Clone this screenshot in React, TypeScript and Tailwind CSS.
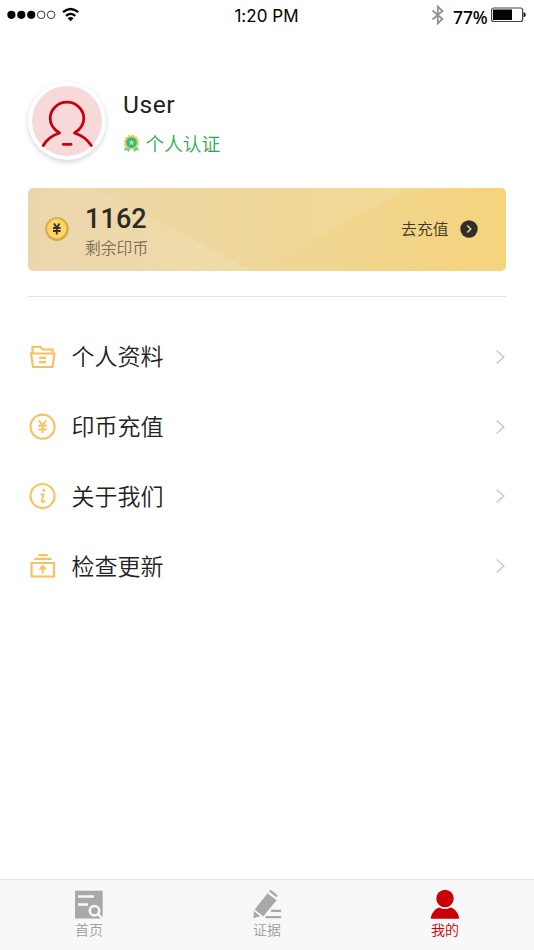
import type { ReactNode } from 'react';

const cjk = "font-['Noto_Sans_CJK_SC',sans-serif]";

function StatusBar() {
  return (
    <header className="flex h-8 shrink-0 items-center justify-between">
      <div className="flex w-[179px] items-center">
        <svg width="90" height="32" viewBox="0 0 90 32">
          <g fill="#050505">
            <circle cx="11.4" cy="14.8" r="4.1" />
            <circle cx="21.3" cy="14.8" r="4.1" />
            <circle cx="31.2" cy="14.8" r="4.1" />
          </g>
          <g fill="none" stroke="#222" strokeWidth="0.9">
            <circle cx="41.2" cy="14.8" r="3.8" />
            <circle cx="51.1" cy="14.8" r="3.8" />
          </g>
          <g fill="none" stroke="#050505" strokeWidth="2.3">
            <path d="M63 12.2Q70.5 5.8 78.300 12.200" />
            <path d="M66 15.900Q70.600 11.900 75.300 15.900" />
          </g>
          <path d="M67.600 18.200Q70.600 15.900 73.600 18.200L70.600 21.200Z" fill="#050505" />
        </svg>
      </div>
      <span className="whitespace-nowrap pt-px font-[Inter,sans-serif] text-[17px] leading-[33px] tracking-[0.05px] text-black">1:20 PM</span>
      <div className="flex w-[180px] items-center justify-end">
        <svg width="26" height="32" viewBox="427 0 26 32" fill="none" stroke="#929292" strokeWidth="1.8">
          <path d="M432.500 10.500L442.500 19L437.800 23.500V6.500L442.500 11L432.500 19.500" />
        </svg>
        <span className="w-[37px] whitespace-nowrap pt-0.5 font-['Noto_Sans',sans-serif] text-[17.500px] font-medium tracking-[-0.1px] text-black">77%</span>
        <svg width="44" height="32" viewBox="490 0 44 32">
          <rect x="491.600" y="8" width="31" height="13.500" rx="2" fill="white" stroke="#444" strokeWidth="1.200" />
          <path d="M493 9.500H512V20H493Z" fill="#050505" />
          <path d="M523.500 12.200C526.500 12.200 526.500 17.200 523.500 17.200Z" fill="#222" />
        </svg>
      </div>
    </header>
  );
}

function Avatar() {
  return (
    <div className="size-[78px] shrink-0 rounded-full border-4 border-white bg-[#f7d9da] shadow-[0_2px_5px_rgba(0,0,0,0.18)]">
      <svg width="70" height="70" viewBox="32 86 70 70" fill="none" stroke="#c7000b" strokeWidth="2.8" strokeLinecap="round" strokeLinejoin="round">
        <path d="M43.300 145.500Q48.500 136.500 59.500 133C54 129.500 50.200 124.500 50.200 118.500A16.800 16.300 0 0 1 83.800 118.500C83.800 124.500 80 129.500 74.500 133Q85.500 136.500 91.300 145.500" />
        <path d="M63.300 144.300H71" />
      </svg>
    </div>
  );
}

function Medal() {
  return (
    <svg width="17" height="19" viewBox="0 0 17 19">
      <path d="M3 12L1 16.500L4 16L5.500 18L8 13ZM14 12L16 16.500L13 16L11.500 18L9 13Z" fill="#4ac9ad" />
      <circle cx="8.500" cy="8.500" r="6.800" fill="#efc75a" stroke="#efc75a" strokeWidth="2" strokeDasharray="2.200 1.360" />
      <circle cx="8.500" cy="8.500" r="5.300" fill="#22bd90" />
      <path d="M8.500 5.500L9.400 7.500L11.500 7.700L9.900 9.200L10.400 11.300L8.500 10.200L6.600 11.300L7.100 9.200L5.500 7.700L7.600 7.500Z" fill="#c9dd83" />
    </svg>
  );
}

function BalanceCard() {
  return (
    <section className="relative mx-7 mt-[26px] flex h-[82.500px] w-[477.500px] shrink-0 items-center overflow-hidden rounded-[5px] bg-linear-to-r from-[#ead7ae] via-[#efd697] to-[#f5d47d]">
      <svg className="absolute inset-0" width="478" height="83" viewBox="0 0 478 83">
        <defs>
          <linearGradient id="lower" x1="0" x2="1">
            <stop stopColor="#fff" stopOpacity="0" />
            <stop offset="1" stopColor="#fff" stopOpacity="0.15" />
          </linearGradient>
          <linearGradient id="upper" x1="0" x2="1">
            <stop stopColor="#fff" stopOpacity="0" />
            <stop offset="1" stopColor="#fff" stopOpacity="0.12" />
          </linearGradient>
        </defs>
        <path d="M0 0H67L225 83H0Z" fill="url(#lower)" />
        <path d="M225 83L382 0H180V59Z" fill="url(#upper)" />
      </svg>
      <svg className="relative ml-[16px]" width="26" height="26" viewBox="0 0 26 26">
        <circle cx="13" cy="13.100" r="11.800" fill="#d9a943" />
        <circle cx="12.800" cy="12.600" r="9.800" fill="#ffd568" />
        <path d="M10 7.500L12.800 11.500L15.600 7.500M12.800 11.500V18.500M9 12H16.600M9 15H16.600" fill="none" stroke="#38342a" strokeWidth="1.900" />
      </svg>
      <div className="relative ml-[15px] flex flex-col pt-[5px]">
        <strong className="font-[Roboto,sans-serif] text-[27px] font-medium leading-[31px] tracking-[0.100px] text-[#2b2a27]">1162</strong>
        <span className={`${cjk} text-[15.800px] font-[350] leading-[25px] text-[#7b6e54]`}>剩余印币</span>
      </div>
      <button className="relative ml-auto mr-[28px] flex items-center gap-[11px]">
        <span className={`${cjk} text-[15.800px] font-[350] leading-6 text-[#40382a]`}>去充值</span>
        <svg width="18" height="18" viewBox="0 0 18 18">
          <circle cx="9" cy="9" r="8.700" fill="#302e29" />
          <path d="M7.200 5.500L10.800 9L7.200 12.500" fill="none" stroke="#efd38a" strokeWidth="1.500" />
        </svg>
      </button>
    </section>
  );
}

function MenuRow({ label, children }: { label: string; children: ReactNode }) {
  return (
    <button className="flex h-[69.800px] w-full items-center text-left">
      <svg width="28" height="28" viewBox="0 0 28 28" fill="none" stroke="#f8c261" strokeWidth="2.200">
        {children}
      </svg>
      <span className={`${cjk} ml-[15.500px] pb-[3px] text-[23px] font-[350] leading-8 text-[#222]`}>{label}</span>
      <svg className="ml-auto" width="12" height="18" viewBox="0 0 12 18" fill="none" stroke="#c9c9c9" strokeWidth="1.600">
        <path d="M1.700 2.500L8.800 9L1.700 15.500" />
      </svg>
    </button>
  );
}

function TabItem({ label, active = false, children }: { label: string; active?: boolean; children: ReactNode }) {
  return (
    <button className={`flex flex-1 flex-col items-center pt-[9px] ${active ? 'text-[#cc0007]' : 'text-[#a9a9a9]'}`}>
      <svg width="32" height="32" viewBox="0 0 32 32" fill="currentColor">{children}</svg>
      <span className={`${cjk} -mt-[1.500px] text-[14px] font-[350] leading-5 ${active ? 'text-[#cc0007]' : 'text-[#9d9d9d]'}`}>{label}</span>
    </button>
  );
}

export default function App() {
  return (
    <div className="flex h-[950px] w-[534px] flex-col overflow-hidden bg-white">
      <StatusBar />
      <section className="ml-7 mt-[50px] flex h-20 shrink-0 items-start">
        <Avatar />
        <div className="ml-[17px] flex flex-col">
          <h1 className="mt-[7px] font-[Roboto,sans-serif] text-[24.500px] font-normal leading-8 tracking-[0.600px] text-[#222]">User</h1>
          <div className="mt-[10px] flex h-6 items-center gap-[5.500px]">
            <Medal />
            <span className={`${cjk} text-[18.700px] font-[350] leading-6 text-[#2eaa53]`}>个人认证</span>
          </div>
        </div>
      </section>
      <BalanceCard />
      <div className="mx-7 mt-[25.500px] h-px shrink-0 bg-[#e2e2e2]" />
      <nav className="ml-7 mr-[27px] mt-[25px] flex flex-col">
        <MenuRow label="个人资料">
          <path d="M4.500 10V3.800H12L14.800 6.500H24.500V10M3 10.500H26.500L24.500 24H5Z" />
          <path d="M11 14.800H18M11 19.200H18" />
        </MenuRow>
        <MenuRow label="印币充值">
          <circle cx="14.500" cy="13.700" r="12" />
          <path d="M10.800 7.300L14.500 12.300L18.200 7.300M14.500 12.300V20.300M10.200 12.800H18.800M10.200 16.500H18.800" strokeWidth="1.900" />
        </MenuRow>
        <MenuRow label="关于我们">
          <circle cx="14.500" cy="14" r="12" />
          <path d="M12.300 12.300H15.500L13.700 19Q14.300 21 17 18.700" strokeWidth="1.800" />
          <circle cx="15.700" cy="8.300" r="1.500" fill="#f8c261" stroke="none" />
        </MenuRow>
        <MenuRow label="检查更新">
          <path d="M3.500 11H26V24.500H3.500Z" />
          <path d="M6.500 6.800H23.500M10.300 3H19.700" />
          <path d="M14.700 21.500V15M11.700 17.300L14.700 14.200L17.700 17.300" strokeWidth="2" />
        </MenuRow>
      </nav>
      <footer className="mt-auto flex h-[71.500px] shrink-0 border-t border-[#e5e5e5] bg-[#f8f8f8]">
        <TabItem label="首页">
          <path d="M2 1.700H29.700V29.500H2Z" />
          <path d="M5 7.500H21M5 15.500H15M24.500 24.500L30 30" fill="none" stroke="#f8f8f8" strokeWidth="2.400" />
          <circle cx="21.500" cy="21.700" r="4.700" fill="#a9a9a9" stroke="#f8f8f8" strokeWidth="2.600" />
        </TabItem>
        <TabItem label="证据">
          <path d="M16.500 4.200L25.500 11.200L12.300 27.500L3.700 20.500ZM18 2.500L19.700 0.800L26.700 6.300L25.300 8.300ZM3 22L9.300 27.200L2.300 29.300ZM20 20.800H30V23H20ZM14.500 27H30V29.200H14.500Z" />
        </TabItem>
        <TabItem label="我的" active>
          <circle cx="16" cy="9.500" r="8.700" />
          <path d="M1.700 29.700C2.500 23.500 6.500 19.500 10.500 18.500Q16 21.500 21.500 18.500C25.500 19.500 29.500 23.500 30.300 29.700Z" />
        </TabItem>
      </footer>
    </div>
  );
}
